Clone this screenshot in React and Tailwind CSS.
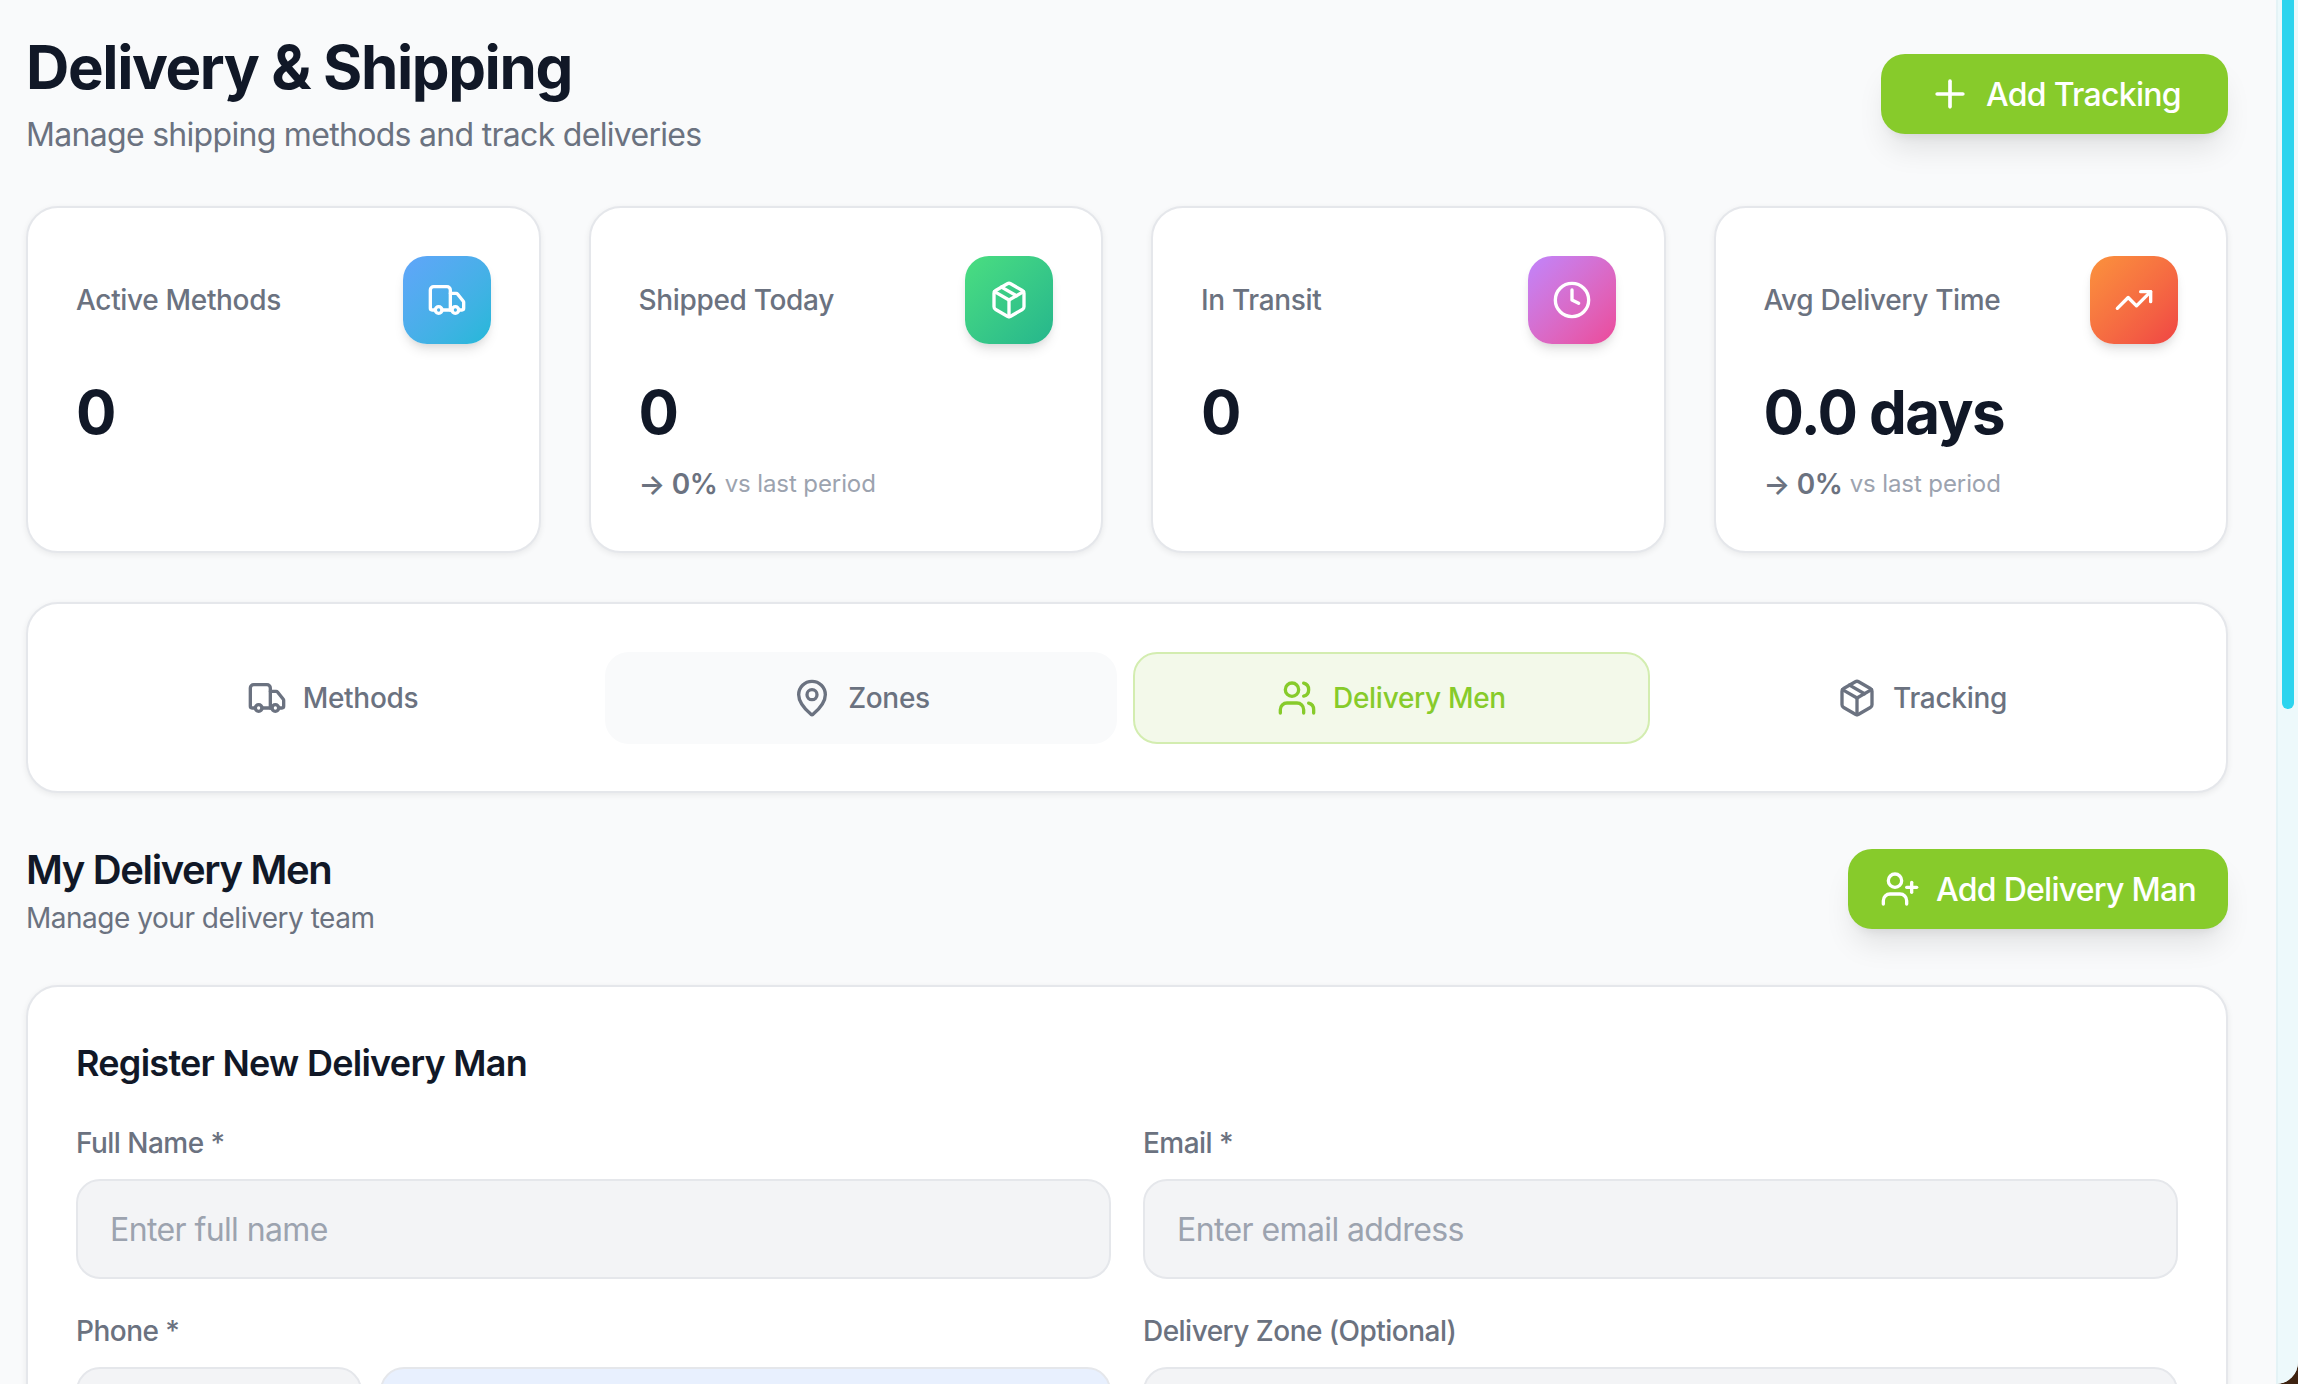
import React from "react";
import { Plus, Truck, Package, Clock, TrendingUp, MapPin, Users, UserPlus } from "lucide-react";

function Stat({ label, value, trend, grad, Icon }) {
  return (
    <div className="bg-white border-2 border-[#e5e7eb] rounded-[32px] pt-[48px] px-[48px] pb-[47px] shadow-[0_2px_6px_rgba(0,0,0,0.07)]">
      <div className="flex items-center justify-between">
        <span className="text-[28px] leading-[40px] font-medium text-[#6b7280] tracking-[-0.33px]">{label}</span>
        <div className={`w-[88px] h-[88px] rounded-[24px] flex items-center justify-center shadow-[0_8px_12px_-2px_rgba(0,0,0,0.1),0_4px_8px_-4px_rgba(0,0,0,0.1)] text-white bg-linear-to-br ${grad}`}>
          <Icon size={40} strokeWidth={2} />
        </div>
      </div>
      <div className="mt-[32px] text-[60px] leading-[72px] font-bold text-[#111827] tracking-[-1.55px]">{value}</div>
      {trend && (
        <div className="mt-[16px] flex items-center h-[40px] text-[#6b7280]">
          <span className="text-[28px] font-semibold tracking-[-0.3px]">→ 0%</span>
          <span className="ml-[7px] text-[24px] text-[#9ca3af] tracking-[-0.1px]">vs last period</span>
        </div>
      )}
    </div>
  );
}

function Tab({ Icon, label, cls }) {
  return (
    <button className={`h-[92px] rounded-[24px] flex items-center justify-center gap-[16px] text-[28px] font-medium tracking-[-0.3px] border-2 ${cls}`}>
      <Icon size={40} strokeWidth={2} />
      <span>{label}</span>
    </button>
  );
}

function Field({ label, placeholder }) {
  return (
    <div>
      <label className="block mb-[16px] text-[28px] leading-[40px] font-medium text-[#6b7280] tracking-[-0.53px]">{label}</label>
      <input placeholder={placeholder} className="block w-full h-[100px] px-[32px] rounded-[24px] border-2 border-[#e5e7eb] bg-[#f3f4f6] text-[32px] tracking-[-0.6px] placeholder:text-[#9ca3af] outline-none" />
    </div>
  );
}

export default function App() {
  return (
    <div className="h-[1384px] w-full overflow-hidden bg-[#3d2210] font-['Inter',sans-serif] antialiased">
      <div className="h-full flex overflow-hidden rounded-br-[22px] bg-[#f9fafb]">
        <main className="w-[2276px] shrink-0 pl-[26px] pr-[48px] pt-[31px]">
          <header className="flex items-center justify-between">
            <div>
              <h1 className="text-[60px] leading-[72px] font-bold text-[#111827] tracking-[-1.4px]">Delivery &amp; Shipping</h1>
              <p className="mt-[8px] text-[32px] leading-[48px] text-[#6b7280] tracking-[-0.7px]">Manage shipping methods and track deliveries</p>
            </div>
            <button className="h-[80px] w-[347px] mb-[2px] rounded-[24px] bg-[#87cb2b] text-white text-[32px] leading-[48px] font-medium tracking-[-0.73px] flex items-center justify-center gap-[14px] shadow-[0_20px_30px_-6px_rgba(0,0,0,0.1),0_8px_12px_-8px_rgba(0,0,0,0.1)]">
              <Plus size={44} strokeWidth={2} />
              <span className="mt-[2px]">Add Tracking</span>
            </button>
          </header>

          <section className="mt-[47px] grid grid-cols-4 gap-[48px]">
            <Stat label="Active Methods" value="0" grad="from-[#60a5fa] to-[#22b8d8]" Icon={Truck} />
            <Stat label="Shipped Today" value="0" trend grad="from-[#4ade80] to-[#25b68c]" Icon={Package} />
            <Stat label="In Transit" value="0" grad="from-[#c084fc] to-[#ec4899]" Icon={Clock} />
            <Stat label="Avg Delivery Time" value="0.0 days" trend grad="from-[#fb923c] to-[#ef4444]" Icon={TrendingUp} />
          </section>

          <nav className="mt-[49px] bg-white border-2 border-[#e5e7eb] rounded-[32px] pt-[48px] pb-[47px] px-[48px] shadow-[0_2px_6px_rgba(0,0,0,0.07)] grid grid-cols-[513px_512px_517px_512px] gap-[16px]">
            <Tab Icon={Truck} label="Methods" cls="border-transparent text-[#6b7280]" />
            <Tab Icon={MapPin} label="Zones" cls="border-transparent bg-[#f9fafb] text-[#6b7280]" />
            <Tab Icon={Users} label="Delivery Men" cls="border-[#d3edb0] bg-[#f3f9ea] text-[#87cb2b]" />
            <Tab Icon={Package} label="Tracking" cls="border-transparent text-[#6b7280]" />
          </nav>

          <div className="mt-[49px] flex items-center justify-between">
            <div>
              <h2 className="text-[40px] leading-[56px] font-semibold text-[#111827] tracking-[-1.37px]">My Delivery Men</h2>
              <p className="text-[28px] leading-[40px] text-[#6b7280] tracking-[-0.48px]">Manage your delivery team</p>
            </div>
            <button className="h-[80px] w-[380px] mb-[2px] rounded-[24px] bg-[#87cb2b] text-white text-[32px] leading-[48px] font-medium tracking-[-0.73px] flex items-center justify-center gap-[16px] shadow-[0_20px_30px_-6px_rgba(0,0,0,0.1),0_8px_12px_-8px_rgba(0,0,0,0.1)]">
              <UserPlus size={40} strokeWidth={2} />
              <span className="mt-[2px]">Add Delivery Man</span>
            </button>
          </div>

          <section className="mt-[47px] bg-white border-2 border-[#e5e7eb] rounded-[32px] p-[48px] shadow-[0_2px_6px_rgba(0,0,0,0.07)]">
            <h3 className="text-[36px] leading-[56px] font-semibold text-[#111827] tracking-[-0.73px]">Register New Delivery Man</h3>
            <div className="mt-[32px] grid grid-cols-2 gap-x-[32px] gap-y-[32px]">
              <Field label="Full Name *" placeholder="Enter full name" />
              <Field label="Email *" placeholder="Enter email address" />
              <div>
                <label className="block mb-[16px] text-[28px] leading-[40px] font-medium text-[#6b7280] tracking-[-0.53px]">Phone *</label>
                <div className="flex gap-[18px]">
                  <input aria-label="Country code" className="block w-[286px] shrink-0 h-[100px] px-[32px] rounded-[24px] border-2 border-[#e5e7eb] bg-[#f3f4f6] outline-none" />
                  <input aria-label="Phone number" className="block flex-1 min-w-0 h-[100px] px-[32px] rounded-[24px] border-2 border-[#e5e7eb] bg-[#e8f0fe] outline-none" />
                </div>
              </div>
              <Field label="Delivery Zone (Optional)" placeholder="" />
            </div>
          </section>
        </main>
        <aside className="w-[22px] shrink-0 border-l-2 border-[#e4f3f6] bg-[#edf9fb] pl-[4px]">
          <div className="w-[12px] h-[709px] rounded-b-full bg-[#2dd4ee]" />
        </aside>
      </div>
    </div>
  );
}
